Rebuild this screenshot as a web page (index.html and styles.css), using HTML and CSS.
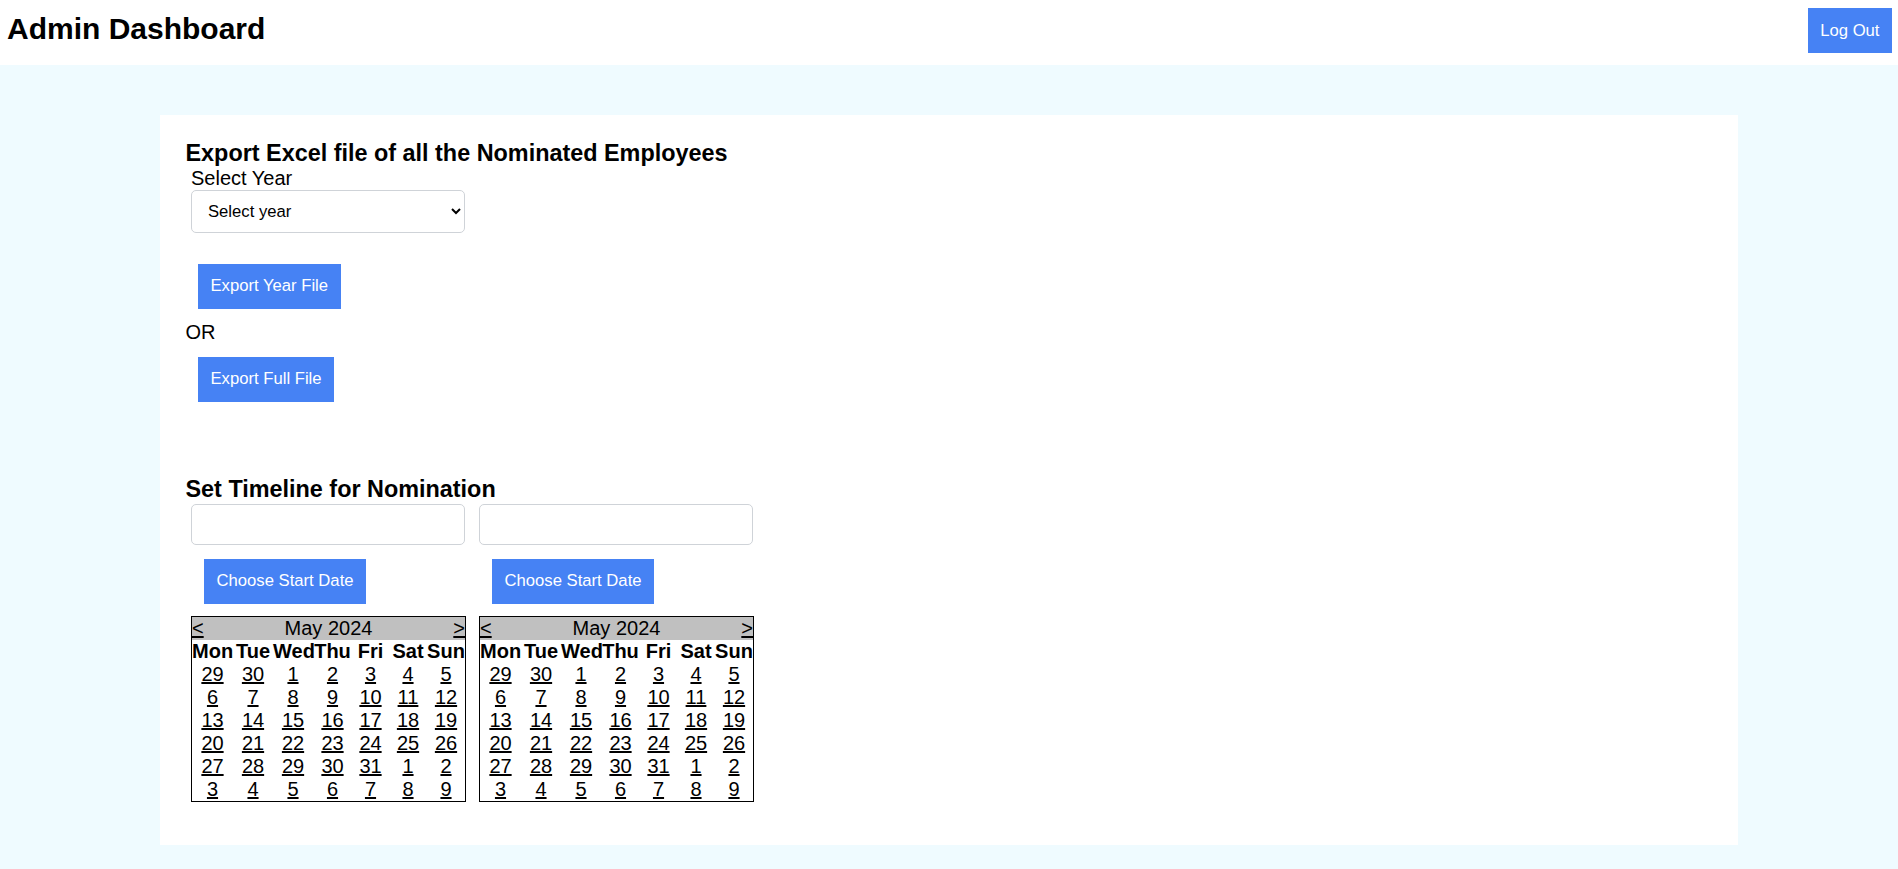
FILE: index.html
```html
<!DOCTYPE html>
<html lang="en">
<head>
<meta charset="utf-8">
<title>Admin Dashboard</title>
<link rel="stylesheet" href="styles.css">
</head>
<body>
<header class="topbar">
  <h1 class="title">Admin Dashboard</h1>
  <button class="btn">Log Out</button>
</header>
<main class="page">
  <section class="card">
    <h3 class="section-title export-title">Export Excel file of all the Nominated Employees</h3>
    <label class="field-label">Select Year</label>
    <select class="year-select"><option>Select year</option></select>
    <button class="btn btn-year">Export Year File</button>
    <div class="or">OR</div>
    <button class="btn btn-full">Export Full File</button>

    <h3 class="section-title timeline-title">Set Timeline for Nomination</h3>
    <div class="timeline">
      <div class="col">
        <input class="date-input" type="text">
        <button class="btn btn-date">Choose Start Date</button>
        <div class="calendar">
          <div class="cal-head"><a class="cal-nav">&lt;</a><span>May 2024</span><a class="cal-nav">&gt;</a></div>
          <div class="cal-grid">
            <span class="cal-day">Mon</span><span class="cal-day">Tue</span><span class="cal-day">Wed</span><span class="cal-day">Thu</span><span class="cal-day">Fri</span><span class="cal-day">Sat</span><span class="cal-day">Sun</span>
            <a class="cal-date">29</a><a class="cal-date">30</a><a class="cal-date">1</a><a class="cal-date">2</a><a class="cal-date">3</a><a class="cal-date">4</a><a class="cal-date">5</a>
            <a class="cal-date">6</a><a class="cal-date">7</a><a class="cal-date">8</a><a class="cal-date">9</a><a class="cal-date">10</a><a class="cal-date">11</a><a class="cal-date">12</a>
            <a class="cal-date">13</a><a class="cal-date">14</a><a class="cal-date">15</a><a class="cal-date">16</a><a class="cal-date">17</a><a class="cal-date">18</a><a class="cal-date">19</a>
            <a class="cal-date">20</a><a class="cal-date">21</a><a class="cal-date">22</a><a class="cal-date">23</a><a class="cal-date">24</a><a class="cal-date">25</a><a class="cal-date">26</a>
            <a class="cal-date">27</a><a class="cal-date">28</a><a class="cal-date">29</a><a class="cal-date">30</a><a class="cal-date">31</a><a class="cal-date">1</a><a class="cal-date">2</a>
            <a class="cal-date">3</a><a class="cal-date">4</a><a class="cal-date">5</a><a class="cal-date">6</a><a class="cal-date">7</a><a class="cal-date">8</a><a class="cal-date">9</a>
          </div>
        </div>
      </div>
      <div class="col">
        <input class="date-input" type="text">
        <button class="btn btn-date">Choose Start Date</button>
        <div class="calendar">
          <div class="cal-head"><a class="cal-nav">&lt;</a><span>May 2024</span><a class="cal-nav">&gt;</a></div>
          <div class="cal-grid">
            <span class="cal-day">Mon</span><span class="cal-day">Tue</span><span class="cal-day">Wed</span><span class="cal-day">Thu</span><span class="cal-day">Fri</span><span class="cal-day">Sat</span><span class="cal-day">Sun</span>
            <a class="cal-date">29</a><a class="cal-date">30</a><a class="cal-date">1</a><a class="cal-date">2</a><a class="cal-date">3</a><a class="cal-date">4</a><a class="cal-date">5</a>
            <a class="cal-date">6</a><a class="cal-date">7</a><a class="cal-date">8</a><a class="cal-date">9</a><a class="cal-date">10</a><a class="cal-date">11</a><a class="cal-date">12</a>
            <a class="cal-date">13</a><a class="cal-date">14</a><a class="cal-date">15</a><a class="cal-date">16</a><a class="cal-date">17</a><a class="cal-date">18</a><a class="cal-date">19</a>
            <a class="cal-date">20</a><a class="cal-date">21</a><a class="cal-date">22</a><a class="cal-date">23</a><a class="cal-date">24</a><a class="cal-date">25</a><a class="cal-date">26</a>
            <a class="cal-date">27</a><a class="cal-date">28</a><a class="cal-date">29</a><a class="cal-date">30</a><a class="cal-date">31</a><a class="cal-date">1</a><a class="cal-date">2</a>
            <a class="cal-date">3</a><a class="cal-date">4</a><a class="cal-date">5</a><a class="cal-date">6</a><a class="cal-date">7</a><a class="cal-date">8</a><a class="cal-date">9</a>
          </div>
        </div>
      </div>
    </div>
  </section>
</main>
</body>
</html>
```

FILE: styles.css
```css
* {
  box-sizing: border-box;
}

body {
  margin: 0;
  background: #effbff;
  font-family: "Liberation Sans", Arial, sans-serif;
  font-size: 20px;
  color: #000;
}

.topbar {
  background: #fff;
  height: 65px;
  display: flex;
  justify-content: space-between;
  align-items: flex-start;
  padding: 8px 6px 0 7px;
}

.title {
  margin: 4px 0 0;
  font-size: 30px;
  line-height: 34px;
  font-weight: bold;
}

.btn {
  display: block;
  background: #4682f4;
  color: #fff;
  border: none;
  border-radius: 0;
  font-family: "Liberation Sans", Arial, sans-serif;
  font-size: 16.67px;
  line-height: 20px;
  height: 45px;
  padding: 0 12.5px;
  cursor: pointer;
}

.card {
  background: #fff;
  margin: 50px 160px 0;
  padding: 24.5px 25.5px 43px;
}

.section-title {
  margin: 0;
  font-size: 23.4px;
  font-weight: bold;
}

.export-title {
  line-height: 27px;
}

.field-label {
  display: block;
  margin-left: 5.5px;
  line-height: 23px;
}

.year-select {
  display: block;
  margin-left: 5.5px;
  width: 274px;
  height: 43px;
  border: 1px solid #cfd3d8;
  border-radius: 5px;
  background: #fff;
  color: #000;
  font-family: "Liberation Sans", Arial, sans-serif;
  font-size: 16.67px;
  padding: 0 10px 0 12px;
}

.btn-year {
  margin: 31px 0 0 12.5px;
}

.or {
  margin-top: 12px;
  line-height: 23px;
}

.btn-full {
  margin: 13px 0 0 12.5px;
}

.timeline-title {
  margin-top: 73.4px;
  padding-top: 2.4px;
  line-height: 24.6px;
}

.timeline {
  display: flex;
  gap: 13px;
  margin: 2px 0 0 5.5px;
}

.col {
  width: 275px;
}

.date-input {
  display: block;
  width: 274px;
  height: 41px;
  border: 1px solid #cfd3d8;
  border-radius: 5px;
  background: #fff;
}

.btn-date {
  margin: 14px 0 0 13px;
}

.calendar {
  margin-top: 12px;
  width: 275px;
  border: 1px solid #000;
}

.cal-head {
  display: flex;
  justify-content: space-between;
  background: #c0c0c0;
  line-height: 23px;
}

.cal-nav {
  color: #000;
  text-decoration: underline;
}

.cal-grid {
  display: grid;
  grid-template-columns: 41px 40px 40px 39px 37px 38px 38px;
  line-height: 23px;
  text-align: center;
}

.cal-day {
  font-weight: bold;
}

.cal-date {
  color: #000;
  text-decoration: underline;
}
```
